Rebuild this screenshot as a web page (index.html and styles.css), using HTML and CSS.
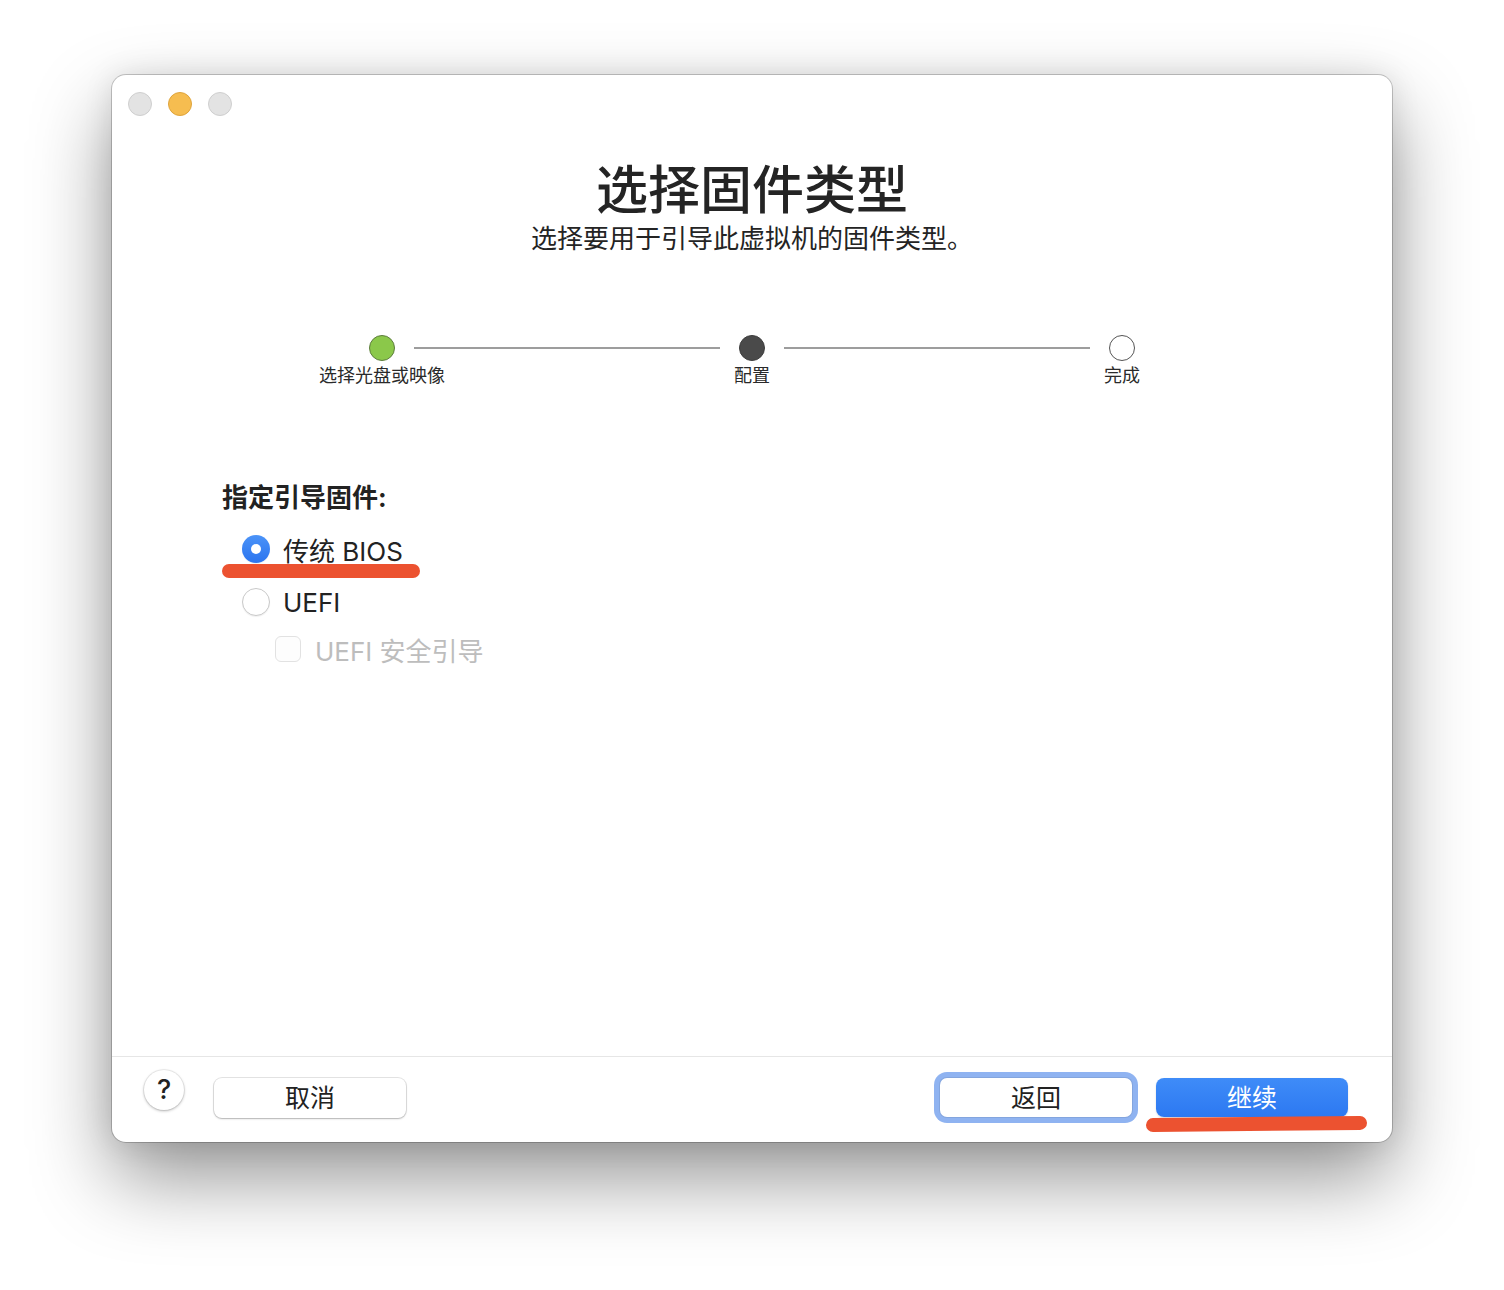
FILE: index.html
```html
<!DOCTYPE html>
<html lang="zh-CN">
<head>
    <meta charset="UTF-8">
    <title>选择固件类型</title>
    <link rel="stylesheet" href="styles.css">
</head>
<body>
    <div class="window">
        <div class="titlebar">
            <span class="light"></span>
            <span class="light light-yellow"></span>
            <span class="light"></span>
        </div>

        <h1 class="title">选择固件类型</h1>
        <p class="subtitle">选择要用于引导此虚拟机的固件类型。</p>

        <div class="stepper">
            <div class="step">
                <span class="dot dot-done"></span>
                <span class="step-label">选择光盘或映像</span>
            </div>
            <div class="step-line"></div>
            <div class="step">
                <span class="dot dot-current"></span>
                <span class="step-label">配置</span>
            </div>
            <div class="step-line"></div>
            <div class="step">
                <span class="dot"></span>
                <span class="step-label">完成</span>
            </div>
        </div>

        <div class="content">
            <div class="heading">指定引导固件:</div>
            <label class="option option-first">
                <span class="radio radio-on"></span>
                <span>传统 BIOS</span>
            </label>
            <label class="option">
                <span class="radio"></span>
                <span>UEFI</span>
            </label>
            <label class="option option-sub">
                <span class="checkbox"></span>
                <span>UEFI 安全引导</span>
            </label>
        </div>

        <div class="footer">
            <button class="help">?</button>
            <button class="btn">取消</button>
            <div class="spacer"></div>
            <button class="btn btn-focus">返回</button>
            <button class="btn btn-primary">继续</button>
        </div>

        <!-- hand-drawn annotations -->
        <div class="mark mark-bios"></div>
        <div class="mark mark-next"></div>
    </div>
</body>
</html>
```

FILE: styles.css
```css
body {
    margin: 0;
    min-height: 100vh;
    overflow: hidden;
    background-color: #ffffff;
    font-family: "Inter", "Noto Sans CJK SC", sans-serif;
    color: #262626;
}

.window {
    position: relative;
    box-sizing: border-box;
    width: 1280px;
    height: 1067px;
    margin: 75px 0 0 112px;
    background-color: #ffffff;
    border-radius: 14px;
    box-shadow: 0 0 0 1px rgba(0, 0, 0, 0.2),
                0 0 30px rgba(0, 0, 0, 0.1),
                0 36px 80px rgba(0, 0, 0, 0.42);
    display: flex;
    flex-direction: column;
}

.titlebar {
    height: 58px;
    display: flex;
    align-items: center;
    gap: 16px;
    padding-left: 16px;
}

.light {
    box-sizing: border-box;
    width: 24px;
    height: 24px;
    border-radius: 50%;
    background-color: #e3e3e3;
    border: 1px solid #cfcfcf;
}

.light-yellow {
    background-color: #f6bd50;
    border-color: #dfa43c;
}

.title {
    margin: 28px 0 0;
    font-size: 52px;
    line-height: 60px;
    font-weight: 500;
    text-align: center;
    color: #242424;
}

.subtitle {
    margin: 3px 0 0;
    font-size: 26px;
    line-height: 30px;
    text-align: center;
    color: #242424;
}

.stepper {
    display: grid;
    grid-template-columns: 64px 1fr 64px 1fr 64px;
    width: 804px;
    margin: 81px 0 0 238px;
}

.step {
    display: flex;
    flex-direction: column;
    align-items: center;
}

.dot {
    box-sizing: border-box;
    width: 26px;
    height: 26px;
    border-radius: 50%;
    border: 1px solid #555555;
    background-color: #ffffff;
}

.dot-done {
    background-color: #8bc84a;
    border-color: #5d7d3d;
}

.dot-current {
    background-color: #4a4a4a;
    border-color: #3c3c3c;
}

.step-label {
    margin-top: 3px;
    font-size: 18px;
    line-height: 24px;
    white-space: nowrap;
    color: #2a2a2a;
}

.step-line {
    height: 2px;
    margin-top: 12px;
    background-color: #9d9d9d;
}

.content {
    padding-left: 110px;
    margin-top: 94px;
}

.heading {
    font-size: 26px;
    line-height: 32px;
    font-weight: bold;
    color: #222222;
}

.option {
    display: flex;
    align-items: center;
    gap: 13px;
    height: 34px;
    margin: 19px 0 0 20px;
    font-size: 26px;
    color: #222222;
}

.option-first {
    margin-top: 18px;
}

.option-sub {
    margin: 13px 0 0 53px;
    gap: 14px;
    color: #bdbdbd;
}

.radio {
    box-sizing: border-box;
    width: 28px;
    height: 28px;
    border-radius: 50%;
    background-color: #ffffff;
    border: 1px solid #c9c9c9;
    box-shadow: 0 1px 1px rgba(0, 0, 0, 0.06);
}

.radio-on {
    position: relative;
    border: none;
    background: linear-gradient(#4b93f8, #2b74ef);
}

.radio-on::after {
    content: "";
    position: absolute;
    left: 9px;
    top: 9px;
    width: 10px;
    height: 10px;
    border-radius: 50%;
    background-color: #ffffff;
}

.checkbox {
    box-sizing: border-box;
    width: 26px;
    height: 26px;
    border-radius: 6px;
    border: 1px solid #e2e2e2;
    background-color: #fdfdfd;
}

.footer {
    margin-top: auto;
    height: 85px;
    border-top: 1px solid #e6e6e6;
    display: flex;
    align-items: flex-start;
    padding: 0 44px 0 32px;
}

.help {
    width: 40px;
    height: 40px;
    margin-top: 13px;
    padding: 0 0 2px;
    border: none;
    border-radius: 50%;
    background-color: #ffffff;
    box-shadow: 0 0 0 1px rgba(0, 0, 0, 0.06), 0 1px 3px rgba(0, 0, 0, 0.28);
    font-family: "Inter", sans-serif;
    font-size: 27px;
    font-weight: 500;
    color: #222222;
}

.btn {
    box-sizing: border-box;
    width: 192px;
    height: 40px;
    margin-top: 21px;
    margin-left: 30px;
    padding: 0 0 4px;
    border: none;
    border-radius: 8px;
    background-color: #ffffff;
    box-shadow: 0 0 0 1px rgba(0, 0, 0, 0.1), 0 1px 2px rgba(0, 0, 0, 0.22);
    font-family: "Inter", "Noto Sans CJK SC", sans-serif;
    font-size: 25px;
    color: #222222;
}

.spacer {
    flex: 1;
}

.btn-focus {
    height: 39px;
    margin-left: 0;
    box-shadow: 0 0 0 1px rgba(0, 0, 0, 0.08), 0 0 0 6px #8fb3f1;
    border-radius: 7px;
}

.btn-primary {
    height: 39px;
    margin-left: 24px;
    background: linear-gradient(#3f8cf8, #2c78f1);
    box-shadow: 0 1px 2px rgba(0, 0, 0, 0.15);
    color: #ffffff;
}

.mark {
    position: absolute;
    height: 14px;
    border-radius: 7px;
    background-color: #ec5230;
}

.mark-bios {
    left: 110px;
    top: 489px;
    width: 198px;
}

.mark-next {
    left: 1034px;
    top: 1042px;
    width: 221px;
    transform: rotate(-0.6deg);
}
```
